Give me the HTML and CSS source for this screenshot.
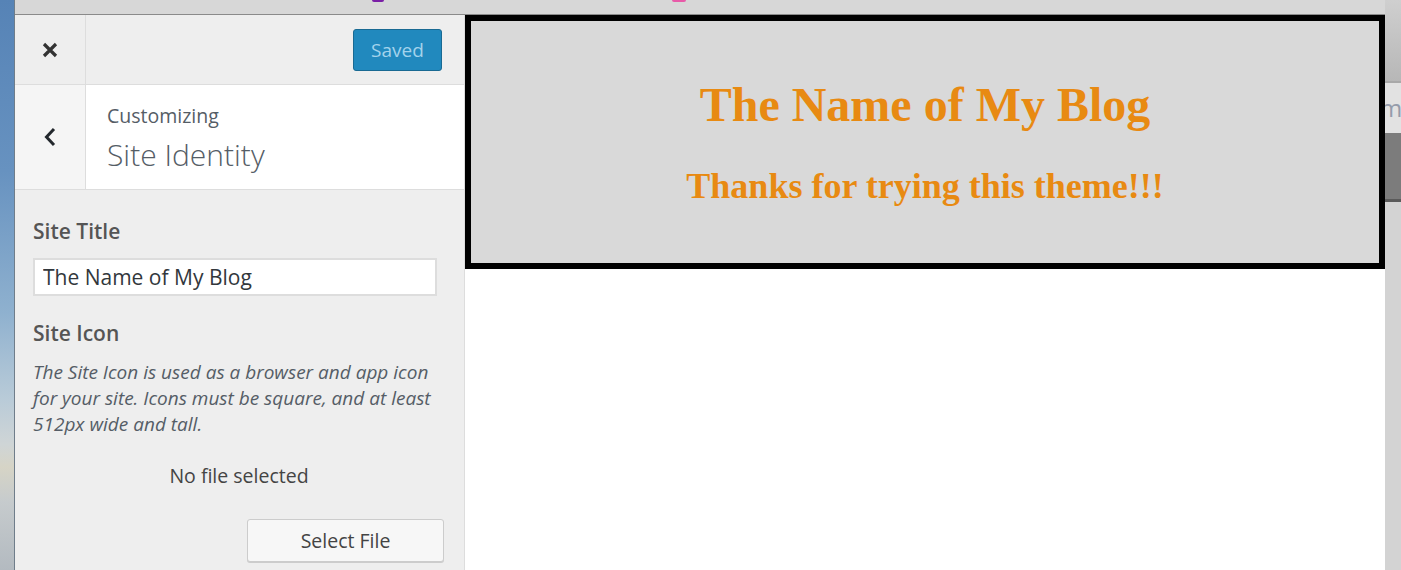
FILE: index.html
```html
<!DOCTYPE html>
<html>
<head>
<meta charset="utf-8">
<link rel="stylesheet" href="styles.css">
</head>
<body>
<div class="desktop"></div>
<div class="window">
  <div class="titlebar">
    <span class="tab-dot dot-purple"></span>
    <span class="tab-dot dot-pink"></span>
  </div>
  <div class="app">
    <aside class="sidebar">
      <div class="sb-header">
        <div class="close-btn">
          <svg width="16" height="16" viewBox="0 0 16 16"><path d="M2 2 L14 14 M14 2 L2 14" stroke="#333" stroke-width="3.2" fill="none"/></svg>
        </div>
        <div class="sb-header-actions">
          <button class="btn-saved">Saved</button>
        </div>
      </div>
      <div class="section-head">
        <div class="back-btn">
          <svg width="14" height="20" viewBox="0 0 14 20"><path d="M11 2 L3.5 10 L11 18" stroke="#23282d" stroke-width="3" fill="none"/></svg>
        </div>
        <div class="section-title">
          <span class="customizing">Customizing</span>
          <h3 class="title">Site Identity</h3>
        </div>
      </div>
      <div class="controls">
        <label class="ctl-label">Site Title</label>
        <input class="text-input" type="text" value="The Name of My Blog">
        <div class="ctl-label icon-label">Site Icon</div>
        <p class="desc">The Site Icon is used as a browser and app icon for your site. Icons must be square, and at least 512px wide and tall.</p>
        <div class="no-file">No file selected</div>
        <div class="btn-row"><button class="btn-select">Select File</button></div>
      </div>
    </aside>
    <main class="preview">
      <header class="site-header">
        <h1 class="blog-name">The Name of My Blog</h1>
        <h2 class="blog-tagline">Thanks for trying this theme!!!</h2>
      </header>
    </main>
  </div>
</div>
<div class="otherwin">
  <div class="ow-top"></div>
  <div class="ow-tab"><span class="ow-letter">m</span></div>
  <div class="ow-dark"></div>
  <div class="ow-body"></div>
</div>
</body>
</html>
```
FILE: styles.css
```css
html, body {
  margin: 0;
  padding: 0;
}
body {
  width: 1401px;
  height: 570px;
  display: flex;
  overflow: hidden;
  font-family: "Open Sans", "Liberation Sans", sans-serif;
  background: #fff;
}
.desktop {
  width: 14px;
  flex: none;
  border-right: 1px solid #6f7d8a;
  background: linear-gradient(to bottom, #5683b6 0%, #6792c0 30%, #8fb1cf 55%, #b9cbd8 70%, #cfd5d6 78%, #d6d4c6 82%, #c6cbcd 88%, #b3bac0 100%);
}
.window {
  width: 1370px;
  flex: none;
  display: flex;
  flex-direction: column;
}
.titlebar {
  height: 14px;
  flex: none;
  background: #d7d7d7;
  border-bottom: 1px solid #8a8a8a;
  position: relative;
}
.tab-dot {
  position: absolute;
  top: 0;
  height: 2px;
  border-radius: 0 0 3px 3px;
}
.dot-purple { left: 357px; width: 12px; background: #7a1fa6; }
.dot-pink { left: 657px; width: 14px; background: #e85aa8; }
.app {
  flex: 1;
  display: flex;
}
.sidebar {
  width: 449px;
  flex: none;
  background: #eeeeee;
  border-right: 1px solid #dddddd;
  display: flex;
  flex-direction: column;
}
.sb-header {
  height: 69px;
  border-bottom: 1px solid #dddddd;
  display: flex;
}
.close-btn {
  width: 70px;
  border-right: 1px solid #dddddd;
  display: flex;
  align-items: center;
  justify-content: center;
}
.close-btn svg { margin-top: 1px; }
.sb-header-actions {
  flex: 1;
  display: flex;
  align-items: center;
  justify-content: flex-end;
  padding-right: 22px;
}
.btn-saved {
  width: 89px;
  height: 42px;
  margin-top: 1px;
  background: #2189be;
  border: 1px solid #196a93;
  border-radius: 3px;
  color: #a3d3ec;
  font-family: "Open Sans", "Liberation Sans", sans-serif;
  font-size: 19px;
  padding: 0;
}
.section-head {
  height: 104px;
  border-bottom: 1px solid #dddddd;
  display: flex;
  background: #fff;
}
.back-btn {
  width: 70px;
  background: #f5f5f5;
  border-right: 1px solid #dddddd;
  display: flex;
  align-items: center;
  justify-content: center;
}
.back-btn svg { margin-left: -1px; margin-top: -1px; }
.section-title {
  flex: 1;
  padding: 17px 0 0 21px;
  display: flex;
  flex-direction: column;
  color: #555d66;
}
.customizing {
  font-size: 19.5px;
  line-height: 28px;
}
.title {
  margin: 0;
  font-size: 30px;
  font-weight: 300;
  line-height: 50px;
  color: #555d66;
}
.controls {
  padding: 27px 0 0 18px;
  display: flex;
  flex-direction: column;
  color: #555d66;
}
.ctl-label {
  font-size: 21px;
  font-weight: 600;
  line-height: 28px;
  color: #555;
}
.text-input {
  box-sizing: border-box;
  width: 404px;
  height: 38px;
  margin-top: 13px;
  border: 2px solid #dddddd;
  background: #fff;
  padding: 0 8px;
  font-family: "Open Sans", "Liberation Sans", sans-serif;
  font-size: 21px;
  color: #32373c;
  outline: none;
}
.icon-label {
  margin-top: 23px;
}
.desc {
  margin: 12px 0 0;
  width: 411px;
  font-size: 19px;
  font-style: italic;
  line-height: 26px;
  color: #555d66;
}
.no-file {
  margin-top: 26px;
  width: 412px;
  text-align: center;
  font-size: 19.5px;
  line-height: 26px;
  color: #444;
}
.btn-row {
  margin-top: 30px;
  width: 411px;
  display: flex;
  justify-content: flex-end;
}
.btn-select {
  width: 197px;
  height: 43px;
  background: #f7f7f7;
  border: 1px solid #cccccc;
  border-radius: 3px;
  box-shadow: 0 1px 0 #cccccc;
  font-family: "Open Sans", "Liberation Sans", sans-serif;
  font-size: 19.5px;
  color: #444;
  padding: 0;
}
.preview {
  flex: 1;
  background: #fff;
}
.site-header {
  height: 242px;
  border: 6px solid #000;
  background: #d9d9d9;
  display: flex;
  flex-direction: column;
  align-items: center;
  font-family: "Liberation Serif", "Times New Roman", serif;
  color: #e88a12;
}
.blog-name {
  margin: 58px 0 0;
  font-size: 48px;
  line-height: 52px;
  font-weight: bold;
}
.blog-tagline {
  margin: 35px 0 0;
  font-size: 36px;
  line-height: 40px;
  font-weight: bold;
}
.otherwin {
  width: 16px;
  flex: none;
  display: flex;
  flex-direction: column;
  background: #d2d2d2;
  box-shadow: inset 2px 0 2px rgba(0,0,0,0.25);
}
.ow-top {
  height: 81px;
  background: linear-gradient(to bottom, #cfcfcf, #b7b7b7);
  border-bottom: 2px solid #a9a9a9;
}
.ow-tab {
  height: 50px;
  background: #e2e2e2;
  overflow: hidden;
  display: flex;
  align-items: center;
}
.ow-letter {
  margin-left: -5px;
  font-family: "Open Sans", sans-serif;
  font-size: 24px;
  line-height: 30px;
  color: #949cab;
}
.ow-dark {
  height: 66px;
  background: #7c7c7c;
  border-bottom: 3px solid #5a5a5a;
}
.ow-body {
  flex: 1;
  background: #d3d3d3;
}
```
